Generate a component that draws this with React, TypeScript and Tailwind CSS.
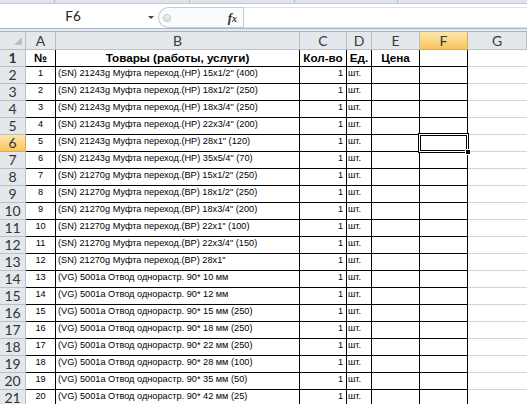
import React from "react";

const GRID = "grid grid-cols-[26px_30px_244px_47px_25px_48px_48px_1fr]";

const items = [
  '(SN) 21243g Муфта переход.(НР) 15x1/2" (400)',
  '(SN) 21243g Муфта переход.(НР) 18x1/2" (250)',
  '(SN) 21243g Муфта переход.(НР) 18x3/4" (250)',
  '(SN) 21243g Муфта переход.(НР) 22x3/4" (200)',
  '(SN) 21243g Муфта переход.(НР) 28x1" (120)',
  '(SN) 21243g Муфта переход.(НР) 35x5/4" (70)',
  '(SN) 21270g Муфта переход.(ВР) 15x1/2" (250)',
  '(SN) 21270g Муфта переход.(ВР) 18x1/2" (250)',
  '(SN) 21270g Муфта переход.(ВР) 18x3/4" (200)',
  '(SN) 21270g Муфта переход.(ВР) 22x1" (100)',
  '(SN) 21270g Муфта переход.(ВР) 22x3/4" (150)',
  '(SN) 21270g Муфта переход.(ВР) 28x1"',
  "(VG) 5001a Отвод однорастр. 90* 10 мм",
  "(VG) 5001a Отвод однорастр. 90* 12 мм",
  "(VG) 5001a Отвод однорастр. 90* 15 мм (250)",
  "(VG) 5001a Отвод однорастр. 90* 18 мм (250)",
  "(VG) 5001a Отвод однорастр. 90* 22 мм (250)",
  "(VG) 5001a Отвод однорастр. 90* 28 мм (100)",
  "(VG) 5001a Отвод однорастр. 90* 35 мм (50)",
  "(VG) 5001a Отвод однорастр. 90* 42 мм (25)",
];

const columns = ["A", "B", "C", "D", "E", "F", "G"];

const headerFont = "font-['Lato','Liberation_Sans',sans-serif]";
const cellFont = "font-['Liberation_Sans',Arial,sans-serif]";
const cell = "border-r border-b border-black";

function RowHeader({ n, active }: { n: number; active?: boolean }) {
  return (
    <div
      className={[
        "flex items-start justify-center border-r border-b text-[14px] leading-[16px] text-[#333]",
        headerFont,
        active
          ? "border-[#e2a93d] bg-gradient-to-b from-[#fce7ad] to-[#f6c45c]"
          : "border-[#b7bfc8] bg-[#e4e7eb]",
      ].join(" ")}
    >
      {n}
    </div>
  );
}

// thick frame + fill handle around the active cell
function ActiveCellFrame() {
  return (
    <div className="pointer-events-none absolute -left-[2px] -top-[2px] z-10 h-[20px] w-[51px] border border-black">
      <div className="h-full w-full border border-white">
        <div className="h-full w-full border border-black" />
      </div>
      <div className="absolute -bottom-[3px] -right-[3px] h-[6px] w-[6px] border border-white bg-black" />
    </div>
  );
}

export default function App() {
  return (
    <div className="h-[404px] w-[527px] overflow-hidden bg-white">
      {/* ribbon bottom edge */}
      <div className="flex h-[3px] bg-[#dfe4ea]">
        <div className="w-[55px] border-r border-[#b3bcc7]" />
        <div className="w-[135px] border-r border-[#b3bcc7]" />
        <div className="w-[105px] border-r border-[#b3bcc7]" />
        <div className="w-[103px] border-r border-[#b3bcc7]" />
        <div className="flex-1" />
      </div>
      <div className="h-px bg-[#c2cad4]" />

      {/* name box + formula bar */}
      <div className="flex h-[24px] bg-white">
        <div className={`relative flex w-[158px] items-center justify-center pr-[12px] text-[13.5px] text-[#222] ${headerFont}`}>
          F6
          <span className="absolute right-[4px] top-[12px] h-0 w-0 border-x-[3px] border-t-[3px] border-x-transparent border-t-[#444]" />
        </div>
        <div className="mt-[3px] flex h-[21px] w-[85px] items-center rounded-l-full border border-r-0 border-[#c3cad3] bg-[#fafbfc]">
          <span className="ml-[4px] h-[8px] w-[8px] rounded-full border border-[#c2c7cd] bg-gradient-to-b from-[#f4f5f6] to-[#d6d9dd]" />
          <span className="ml-auto mr-[6px] font-['Liberation_Serif',serif] text-[13px] font-bold italic text-[#333]">
            f<span className="text-[10px]">x</span>
          </span>
        </div>
        <div className="mt-[3px] h-[21px] w-px bg-[#c3cad3]" />
        <div className="mt-[3px] h-[21px] flex-1 border-y border-[#dde2e8] bg-white" />
      </div>
      <div className="h-[4px] border-y border-[#aab5c2] bg-[#e6eaef]" />

      {/* column headers */}
      <div className={`${GRID} h-[18px] ${headerFont} text-[14px] leading-[17px] text-[#3a3a3a]`}>
        <div className="relative border-r border-b border-[#b7bfc8] bg-[#e4e7eb]">
          <span className="absolute bottom-[4px] right-[3px] h-0 w-0 border-b-[8px] border-l-[8px] border-b-[#b9bfc7] border-l-transparent" />
        </div>
        {columns.map((c) => (
          <div
            key={c}
            className={[
              "flex justify-center border-r border-b",
              c === "F"
                ? "border-[#e2a93d] bg-gradient-to-b from-[#fce7ad] to-[#f6c45c]"
                : "border-[#b7bfc8] bg-[#e4e7eb]",
            ].join(" ")}
          >
            {c}
          </div>
        ))}
      </div>

      {/* header row */}
      <div className={`${GRID} h-[17px] ${cellFont} text-[11.7px] font-bold leading-[16px] text-black`}>
        <RowHeader n={1} />
        <div className={`${cell} text-center`}>№</div>
        <div className={`${cell} text-center`}>Товары (работы, услуги)</div>
        <div className={`${cell} text-center`}>Кол-во</div>
        <div className={`${cell} text-center`}>Ед.</div>
        <div className={`${cell} text-center`}>Цена</div>
        <div className={cell} />
        <div className="border-b border-[#d4d4d4]" />
      </div>

      {items.map((text, i) => {
        const row = i + 2;
        return (
          <div key={row} className={`${GRID} h-[17px] ${cellFont} text-[9.2px] leading-[13px] text-black`}>
            <RowHeader n={row} active={row === 6} />
            <div className={`${cell} text-center`}>{i + 1}</div>
            <div className={`${cell} whitespace-nowrap pl-[2px]`}>{text}</div>
            <div className={`${cell} pr-[3px] text-right`}>1</div>
            <div className={`${cell} pl-[1px]`}>шт.</div>
            <div className={cell} />
            <div className={`${cell} relative`}>{row === 6 && <ActiveCellFrame />}</div>
            <div className="border-b border-[#d4d4d4]" />
          </div>
        );
      })}
    </div>
  );
}
